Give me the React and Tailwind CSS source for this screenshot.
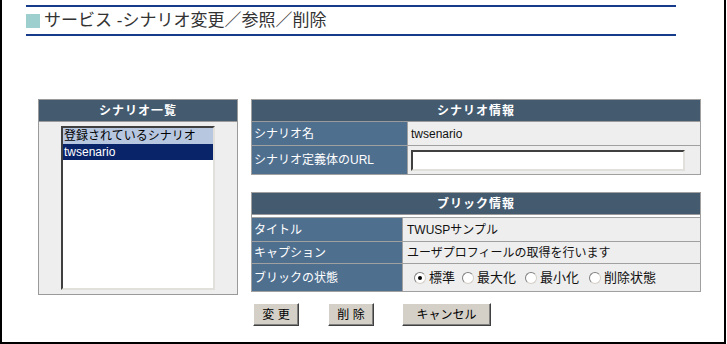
import React from "react";

const Radio = ({ checked }) => (
    <span className="relative inline-block w-[12px] h-[12px] shrink-0 rounded-full bg-white border border-t-[#808080] border-l-[#808080] border-r-[#d4d0c8] border-b-[#d4d0c8]">
        {checked && <span className="absolute left-[3px] top-[3px] w-[4px] h-[4px] rounded-full bg-black" />}
    </span>
);

const Button = ({ label, w }) => (
    <button
        className={`${w} h-[23px] bg-[#d4d0c8] border border-t-white border-l-white border-r-[#404040] border-b-[#404040] shadow-[inset_-1px_-1px_0_#808080] text-[12px] text-black leading-none`}
    >
        {label}
    </button>
);

const HeaderBar = ({ children }) => (
    <div className="h-[22px] bg-[#435a6f] flex items-center justify-center text-white text-[12px] font-bold tracking-[1px] border-b border-[#9a9a9a]">
        {children}
    </div>
);

const Row = ({ label, labelW, h, children, last }) => (
    <div className={`flex ${last ? "" : "border-b border-[#a0a0a0]"}`} style={{ height: h }}>
        <div className={`${labelW} bg-[#4f6f8f] text-white text-[12px] pl-[2px] flex items-center border-r border-[#a0a0a0]`}>
            {label}
        </div>
        <div className="flex-1 bg-[#eeeeee] text-[12px] text-[#111] flex items-center">{children}</div>
    </div>
);

export default function App() {
    return (
        <div className="w-[726px] h-[344px] bg-white border-l-2 border-r-2 border-b-2 border-black font-['Liberation_Sans','Noto_Sans_CJK_JP',sans-serif] flex flex-col">
            {/* Title */}
            <div className="ml-[24px] mt-[5px] w-[650px]">
                <div className="h-[2px] bg-[#153b8a]" />
                <div className="h-[27px] flex items-center gap-[4px]">
                    <div className="w-[14px] h-[14px] bg-[#9ecfcf]" />
                    <span className="text-[17px] text-[#333] leading-none">サービス -シナリオ変更／参照／削除</span>
                </div>
                <div className="h-[2px] bg-[#153b8a]" />
            </div>

            {/* Content */}
            <div className="flex items-start ml-[36px] mt-[63px] gap-[13px]">
                {/* Scenario list */}
                <div className="w-[200px] h-[196px] border border-[#9a9a9a] bg-[#eeeeee] flex flex-col">
                    <HeaderBar>シナリオ一覧</HeaderBar>
                    <div className="pt-[4px]">
                        <div className="mx-auto w-[154px] h-[164px] bg-white border-2 border-t-[#404040] border-l-[#404040] border-r-[#e2e0da] border-b-[#e2e0da] text-[12px]">
                            <div className="h-[16px] bg-[#b7c7e0] text-black flex items-center pl-[1px]">登録されているシナリオ</div>
                            <div className="h-[16px] bg-[#0a246a] text-white flex items-center pl-[1px]">twsenario</div>
                        </div>
                    </div>
                </div>

                {/* Right tables */}
                <div className="w-[450px] flex flex-col">
                    <div className="border border-[#a0a0a0]">
                        <HeaderBar>シナリオ情報</HeaderBar>
                        <Row label="シナリオ名" labelW="w-[156px]" h={24}>
                            <span className="pl-[3px]">twsenario</span>
                        </Row>
                        <Row label="シナリオ定義体のURL" labelW="w-[156px]" h={28} last>
                            <div className="ml-[3px] w-[274px] h-[21px] bg-white border-2 border-t-[#404040] border-l-[#404040] border-r-[#e2e0da] border-b-[#e2e0da]" />
                        </Row>
                    </div>

                    <div className="mt-[17px] border border-[#a0a0a0]">
                        <HeaderBar>ブリック情報</HeaderBar>
                        <div className="h-[3px] bg-white border-b border-[#a0a0a0]" />
                        <Row label="タイトル" labelW="w-[151px]" h={24}>
                            <span className="pl-[4px]">TWUSPサンプル</span>
                        </Row>
                        <Row label="キャプション" labelW="w-[151px]" h={22}>
                            <span className="pl-[4px]">ユーザプロフィールの取得を行います</span>
                        </Row>
                        <Row label="ブリックの状態" labelW="w-[151px]" h={27} last>
                            <div className="flex items-center pl-[11px] text-[13px]">
                                <div className="w-[48px] flex items-center gap-[3px]">
                                    <Radio checked />
                                    <span>標準</span>
                                </div>
                                <div className="w-[63px] flex items-center gap-[3px]">
                                    <Radio />
                                    <span>最大化</span>
                                </div>
                                <div className="w-[64px] flex items-center gap-[3px]">
                                    <Radio />
                                    <span>最小化</span>
                                </div>
                                <div className="flex items-center gap-[3px]">
                                    <Radio />
                                    <span>削除状態</span>
                                </div>
                            </div>
                        </Row>
                    </div>
                </div>
            </div>

            {/* Buttons */}
            <div className="flex ml-[251px] mt-[8px]">
                <Button label="変 更" w="w-[46px]" />
                <div className="w-[29px]" />
                <Button label="削 除" w="w-[46px]" />
                <div className="w-[28px]" />
                <Button label="キャンセル" w="w-[89px]" />
            </div>
        </div>
    );
}
